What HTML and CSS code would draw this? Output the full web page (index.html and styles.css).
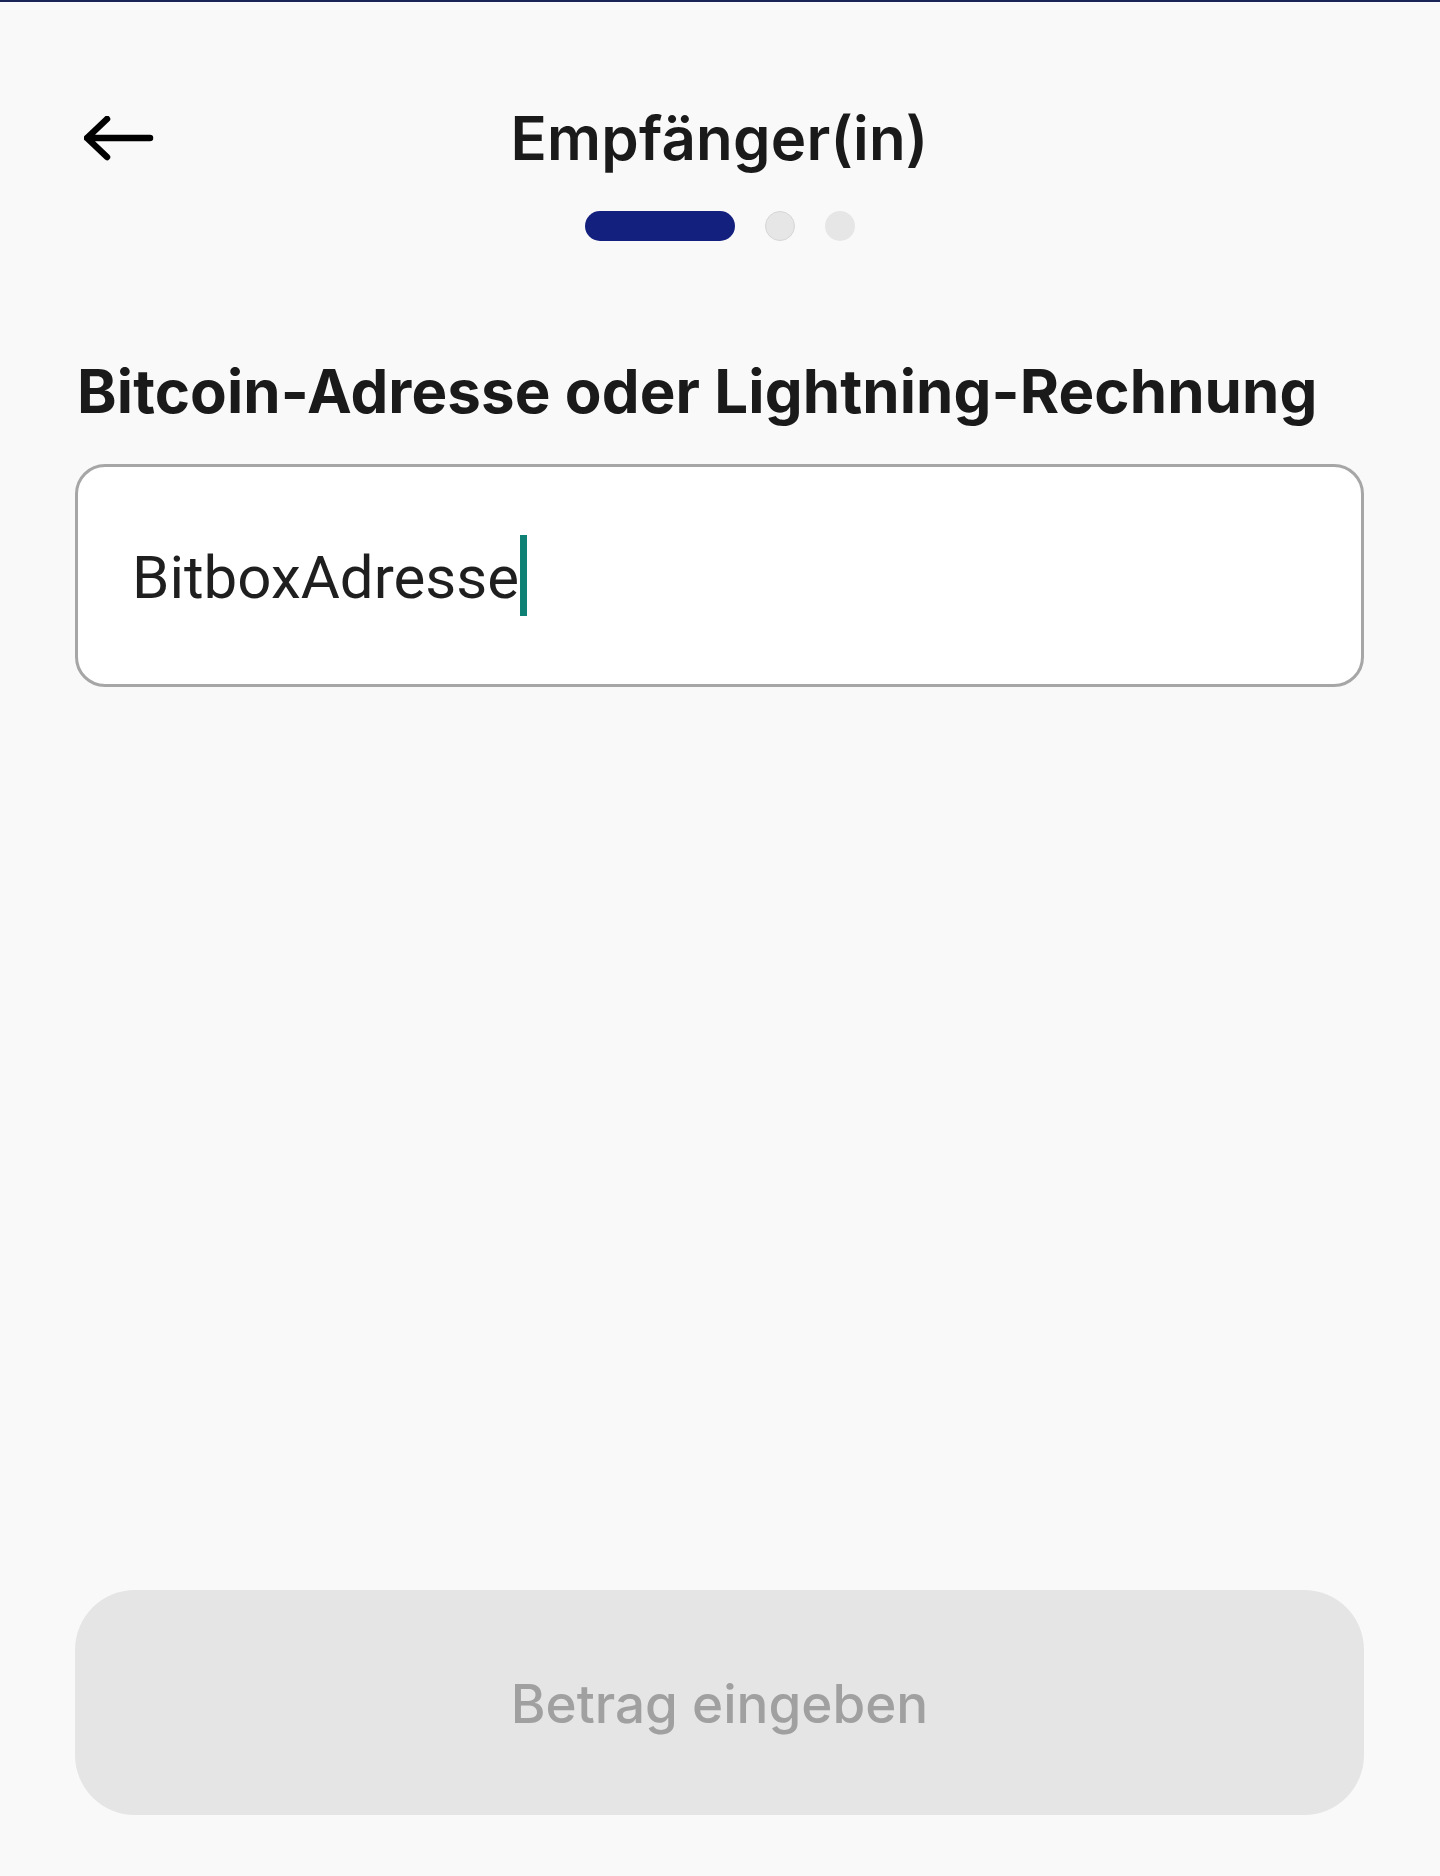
FILE: index.html
```html
<!DOCTYPE html>
<html lang="de">
<head>
    <meta charset="UTF-8">
    <meta name="viewport" content="width=device-width, initial-scale=1.0">
    <title>Empfänger(in)</title>
    <link rel="stylesheet" href="styles.css">
</head>
<body>

<div class="screen">
    <div class="header">
        <button class="back-btn" aria-label="Zurück">
            <svg width="70" height="46" viewBox="0 0 70 46">
                <path d="M3 22 H66 M23 3 L3 22 L23 41" fill="none" stroke="#000" stroke-width="6.5" stroke-linecap="round" stroke-linejoin="round"/>
            </svg>
        </button>
        <h1 class="title">Empfänger(in)</h1>
    </div>

    <div class="steps">
        <span class="step active"></span>
        <span class="step first"></span>
        <span class="step"></span>
    </div>

    <div class="content">
        <h2 class="label">Bitcoin-Adresse oder Lightning-Rechnung</h2>
        <div class="field">
            <span class="field-text">BitboxAdresse</span><span class="caret"></span>
        </div>
    </div>

    <button class="next-btn" disabled>Betrag eingeben</button>
</div>

</body>
</html>
```

FILE: styles.css
```css
body {
    margin: 0;
    background-color: #f9f9f9;
    font-family: 'Inter', 'Roboto', sans-serif;
    color: #1a1a1a;
}
.screen {
    min-height: 1876px;
    box-sizing: border-box;
    border-top: 2px solid #1b2457;
    padding: 0 76px 61px 75px;
    display: flex;
    flex-direction: column;
}
.header {
    position: relative;
    margin-top: 100px;
    height: 72px;
    display: flex;
    align-items: center;
    justify-content: center;
}
.back-btn {
    position: absolute;
    left: 9px;
    top: 14px;
    padding: 0;
    border: none;
    background: none;
    display: flex;
}
.title {
    margin: 0;
    font-size: 60px;
    line-height: 72px;
    font-weight: 600;
    letter-spacing: 0.2px;
}
.steps {
    display: flex;
    justify-content: center;
    gap: 30px;
    margin-top: 37px;
}
.step {
    width: 30px;
    height: 30px;
    border-radius: 15px;
    background-color: #e6e6e6;
    box-sizing: border-box;
}
.step.first {
    border: 1px solid #d6d6d6;
}
.step.active {
    width: 150px;
    background-color: #13207e;
}
.content {
    flex: 1;
}
.label {
    margin: 114px 0 0 2px;
    font-size: 60px;
    line-height: 72px;
    font-weight: 700;
    letter-spacing: 0.1px;
}
.field {
    margin-top: 37px;
    height: 223px;
    box-sizing: border-box;
    border: 3px solid #a6a6a6;
    border-radius: 30px;
    background-color: #fff;
    display: flex;
    align-items: center;
    padding-left: 54px;
    font-family: 'Roboto', sans-serif;
    font-size: 60px;
    color: #1f1f1f;
}
.field-text {
    padding-top: 3px;
}
.caret {
    display: inline-block;
    width: 7px;
    height: 81px;
    margin-left: 1px;
    background-color: #0f8074;
}
.next-btn {
    height: 225px;
    border: none;
    border-radius: 60px;
    background-color: #e5e5e5;
    color: #a0a0a0;
    font-family: 'Inter', sans-serif;
    font-size: 53px;
    font-weight: 500;
    padding-top: 3px;
}
```
